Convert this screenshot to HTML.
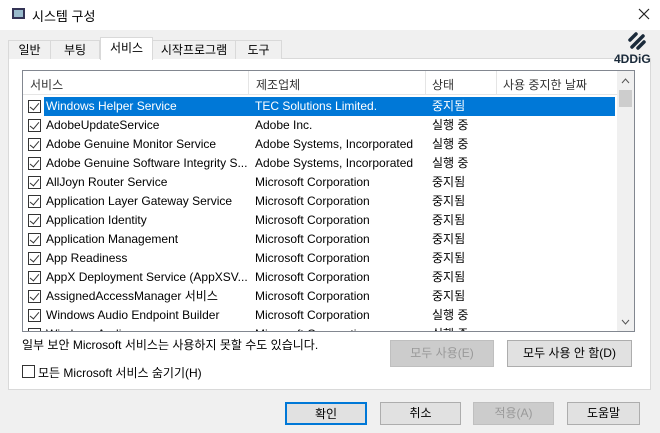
<!DOCTYPE html><html><head><meta charset="utf-8"><style>
*{margin:0;padding:0;box-sizing:border-box}
body{width:660px;height:433px;background:#f0f0f0;font-family:"Liberation Sans","Noto Sans CJK KR",sans-serif;font-size:12px;color:#000;position:relative;overflow:hidden}
.a{position:absolute;white-space:nowrap}
.title{left:0;top:0;width:660px;height:30px;background:#fff}
.panel{left:8px;top:58px;width:643px;height:332px;background:#fff;border:1px solid #d9d9d9}
.list{left:22px;top:70px;width:613px;height:262px;border:1px solid #828790;background:#fff;overflow:hidden}
.row{position:absolute;left:0;height:19px;line-height:19px;width:594px}
.cb{position:absolute;left:5px;top:3px;width:13px;height:13px;border:1px solid #333;background:#fff}
.cb:after{content:"";position:absolute;left:3px;top:0px;width:4px;height:8px;border:solid #333;border-width:0 1.5px 1.5px 0;transform:rotate(40deg)}
.btn{position:absolute;border:1px solid #adadad;background:#e1e1e1;text-align:center;font-size:12px}
.tab{position:absolute;top:40px;height:19px;line-height:18px;border:1px solid #d9d9d9;border-bottom:none;background:#f0f0f0;text-align:center}
</style></head><body>
<div class="a title"></div>
<div class="a" style="left:12px;top:8px;width:13px;height:11px;border:2px solid #335;background:#9bc"></div>
<div class="a" style="left:32px;top:6px;font-size:13px">시스템 구성</div>
<svg class="a" style="left:638px;top:8px" width="12" height="12"><path d="M1 1L11 11M11 1L1 11" stroke="#222" stroke-width="1.2"/></svg>
<div class="a panel"></div>
<div class="tab" style="left:8px;width:43px">일반</div>
<div class="tab" style="left:50px;width:50px">부팅</div>
<div class="tab" style="left:152px;width:84px">시작프로그램</div>
<div class="tab" style="left:235px;width:47px">도구</div>
<div class="tab" style="left:100px;top:37px;width:53px;height:23px;background:#fff;line-height:20px">서비스</div>
<svg class="a" style="left:626px;top:31px" width="22" height="20"><path d="M4 9L10 3M6 16L17 5M12 17L18 11" stroke="#1a2a3a" stroke-width="3.5" stroke-linecap="round" fill="none"/></svg>
<div class="a" style="left:614px;top:52px;font-size:12px;font-weight:bold;color:#1a2a3a">4DDiG</div>
<div class="a list">
<div class="a" style="left:0;top:0;width:594px;height:24px;border-bottom:1px solid #e5e5e5"></div>
<div class="a" style="left:225px;top:0;width:1px;height:24px;background:#e5e5e5"></div>
<div class="a" style="left:402px;top:0;width:1px;height:24px;background:#e5e5e5"></div>
<div class="a" style="left:473px;top:0;width:1px;height:24px;background:#e5e5e5"></div>
<div class="a" style="left:7px;top:5px;color:#333">서비스</div>
<div class="a" style="left:233px;top:5px;color:#333">제조업체</div>
<div class="a" style="left:409px;top:5px;color:#333">상태</div>
<div class="a" style="left:480px;top:5px;color:#333">사용 중지한 날짜</div>
<div class="a" style="left:594px;top:0;width:17px;height:260px;background:#f0f0f0"></div>
<svg class="a" style="left:598px;top:7px" width="9" height="6"><path d="M1 5L4.5 1L8 5" stroke="#555" fill="none"/></svg>
<div class="a" style="left:596px;top:19px;width:13px;height:17px;background:#cdcdcd"></div>
<svg class="a" style="left:598px;top:248px" width="9" height="6"><path d="M1 1L4.5 5L8 1" stroke="#555" fill="none"/></svg>
<div id="rows"></div>
</div>
<div class="a" style="left:22px;top:336px">일부 보안 Microsoft 서비스는 사용하지 못할 수도 있습니다.</div>
<div class="btn" style="left:390px;top:340px;width:104px;height:27px;line-height:25px;color:#999;background:#ccc;border-color:#bfbfbf">모두 사용(E)</div>
<div class="btn" style="left:507px;top:340px;width:125px;height:27px;line-height:25px">모두 사용 안 함(D)</div>
<div class="a" style="left:22px;top:365px;width:13px;height:13px;border:1px solid #333;background:#fff"></div>
<div class="a" style="left:38px;top:364px">모든 Microsoft 서비스 숨기기(H)</div>
<div class="btn" style="left:285px;top:402px;width:82px;height:23px;line-height:21px;border:2px solid #0078d7">확인</div>
<div class="btn" style="left:380px;top:402px;width:81px;height:23px;line-height:21px">취소</div>
<div class="btn" style="left:473px;top:402px;width:81px;height:23px;line-height:21px;color:#999;background:#ccc;border-color:#bfbfbf">적용(A)</div>
<div class="btn" style="left:567px;top:402px;width:73px;height:23px;line-height:21px">도움말</div>
<script>
var d=[["Windows Helper Service","TEC Solutions Limited.","중지됨"],["AdobeUpdateService","Adobe Inc.","실행 중"],["Adobe Genuine Monitor Service","Adobe Systems, Incorporated","실행 중"],["Adobe Genuine Software Integrity S...","Adobe Systems, Incorporated","실행 중"],["AllJoyn Router Service","Microsoft Corporation","중지됨"],["Application Layer Gateway Service","Microsoft Corporation","중지됨"],["Application Identity","Microsoft Corporation","중지됨"],["Application Management","Microsoft Corporation","중지됨"],["App Readiness","Microsoft Corporation","중지됨"],["AppX Deployment Service (AppXSV...","Microsoft Corporation","중지됨"],["AssignedAccessManager 서비스","Microsoft Corporation","중지됨"],["Windows Audio Endpoint Builder","Microsoft Corporation","실행 중"],["Windows Audio","Microsoft Corporation","실행 중"]];
var h="";d.forEach(function(r,i){var t=26+i*19;var s=i==0;h+='<div class="row" style="top:'+t+'px"><div class="cb"></div>'+(s?'<div class="a" style="left:21px;top:0;width:571px;height:19px;background:#0078d7"></div>':'')+'<div class="a" style="left:23px;top:0;color:'+(s?'#fff':'#000')+'">'+r[0]+'</div><div class="a" style="left:232px;top:0;color:'+(s?'#fff':'#000')+'">'+r[1]+'</div><div class="a" style="left:409px;top:0;color:'+(s?'#fff':'#000')+'">'+r[2]+'</div></div>'});
document.getElementById("rows").innerHTML=h;
</script>
</body></html>
